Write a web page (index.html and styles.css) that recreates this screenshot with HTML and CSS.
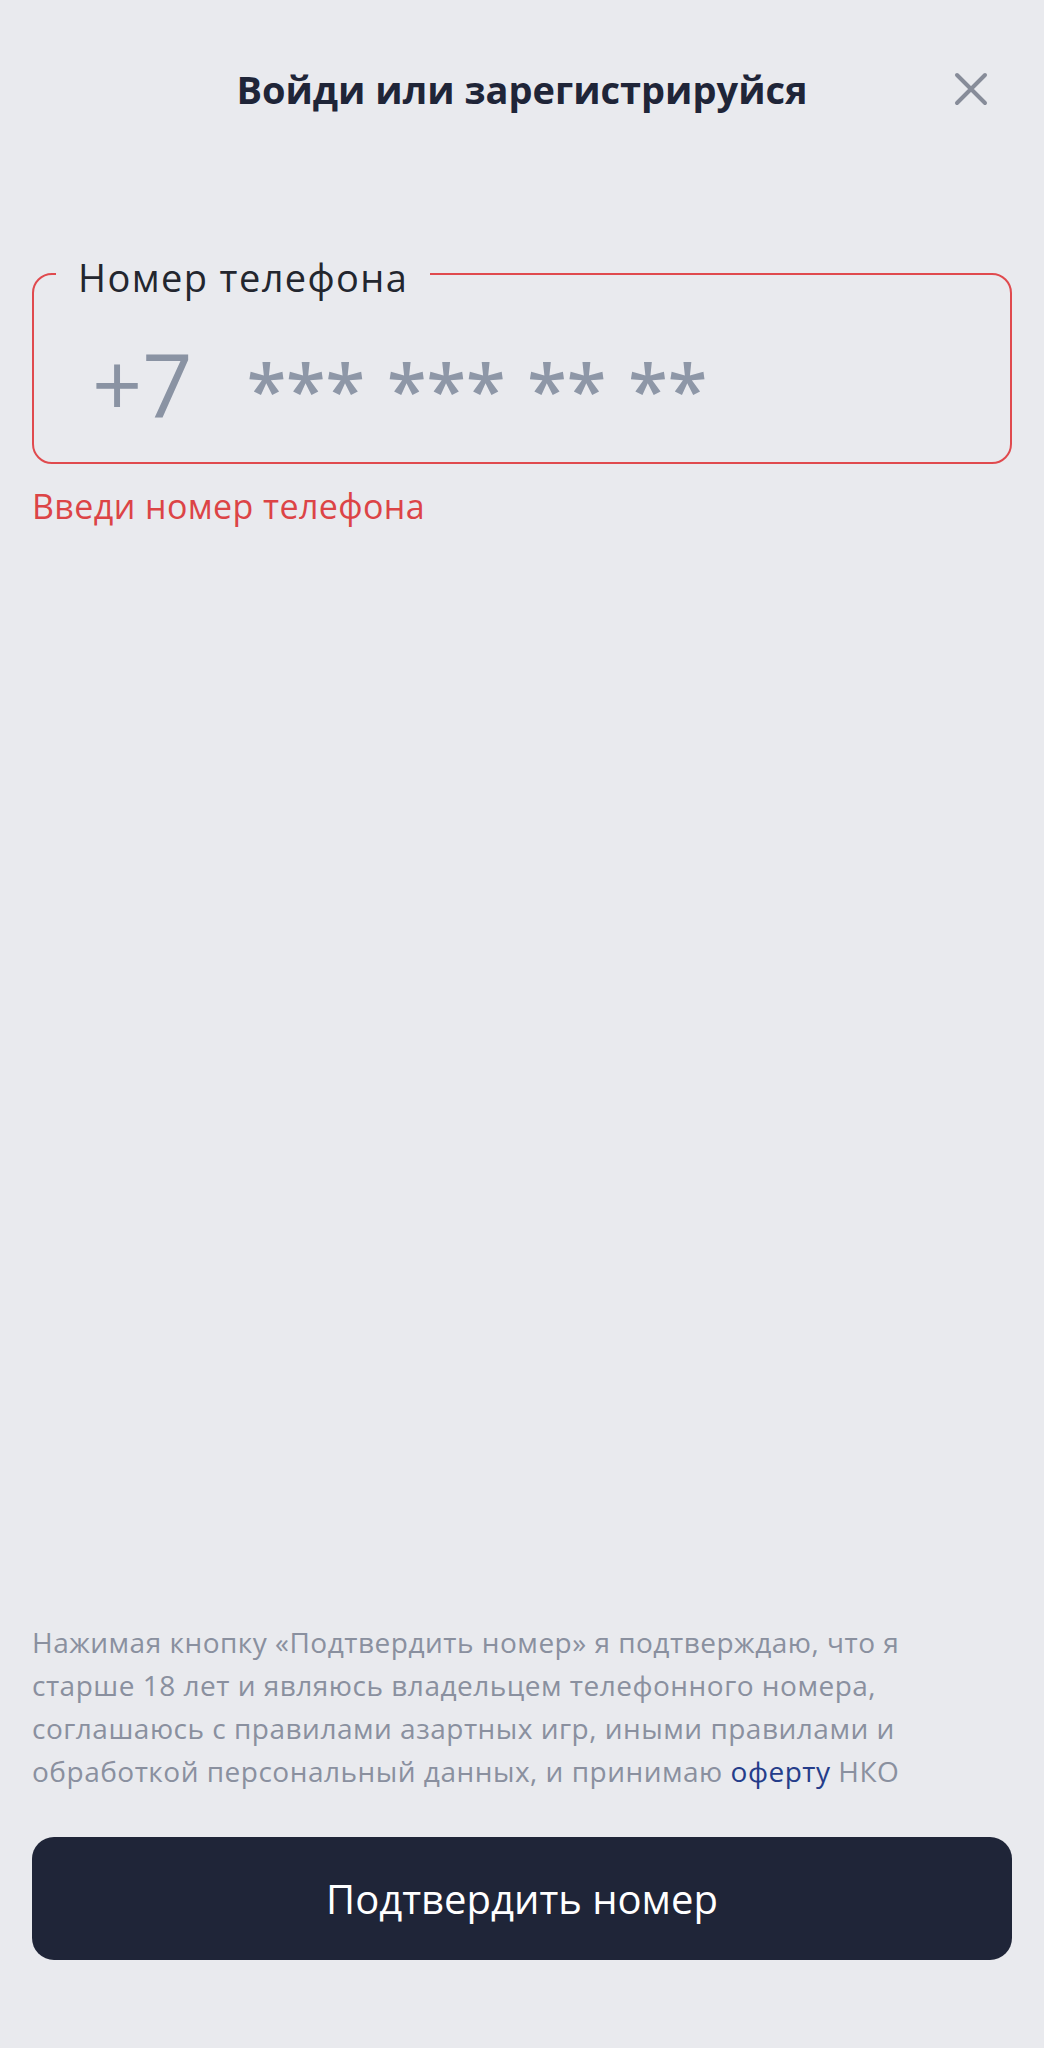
FILE: index.html
```html
<!DOCTYPE html>
<html lang="ru">
<head>
  <meta charset="UTF-8">
  <title>Вход</title>
  <link rel="stylesheet" href="styles.css">
</head>
<body>
  <div class="page">
    <!-- Header -->
    <header class="top-bar">
      <span></span>
      <h1 class="title">Войди или зарегистрируйся</h1>
      <button class="close" aria-label="Закрыть">
        <svg width="34" height="34" viewBox="0 0 34 34">
          <path d="M3 3 L31 31 M31 3 L3 31" stroke="#878c99" stroke-width="4" stroke-linecap="round" fill="none"/>
        </svg>
      </button>
    </header>

    <!-- Phone field -->
    <div class="phone-field">
      <span class="phone-label">Номер телефона</span>
      <div class="phone-row">
        <span class="prefix">+7</span>
        <span class="mask">
          <span>***</span>
          <span>***</span>
          <span>**</span>
          <span>**</span>
        </span>
      </div>
    </div>
    <p class="error">Введи номер телефона</p>

    <!-- Bottom -->
    <p class="terms">
      Нажимая кнопку «Подтвердить номер» я подтверждаю, что я<br>
      старше 18 лет и являюсь владельцем телефонного номера,<br>
      соглашаюсь с правилами азартных игр, иными правилами и<br>
      обработкой персональный данных, и принимаю <a href="#">оферту</a> НКО
    </p>
    <button class="confirm">Подтвердить номер</button>
  </div>
</body>
</html>
```

FILE: styles.css
```css
* { margin: 0; padding: 0; box-sizing: border-box; }

body {
  background-color: #e9eaee;
  font-family: "Open Sans", "Noto Sans", sans-serif;
  color: #1f2538;
}

.page {
  min-height: 100vh;
  display: flex;
  flex-direction: column;
  padding: 0 32px 88px;
}

/* Header */
.top-bar {
  display: grid;
  grid-template-columns: 1fr auto 1fr;
  align-items: center;
  padding-top: 62px;
  height: 116px;
}
.title {
  font-size: 38px;
  font-weight: 700;
  color: #1f2538;
  line-height: 52px;
}
.close {
  justify-self: end;
  margin-right: 24px;
  background: none;
  border: none;
  width: 34px;
  height: 34px;
  cursor: pointer;
}
.close svg { display: block; }

/* Phone field */
.phone-field {
  position: relative;
  margin-top: 157px;
  height: 191px;
  border: 2.5px solid #e04a4e;
  border-radius: 20px;
  padding: 58px 0 0 58px;
}
.phone-label {
  position: absolute;
  top: -22px;
  left: 22px;
  padding: 0 22px;
  background: #e9eaee;
  font-size: 38px;
  letter-spacing: 1.4px;
  line-height: 48px;
  color: #23262e;
}
.phone-row {
  display: flex;
  align-items: center;
  gap: 54px;
  color: #8a93a3;
}
.prefix {
  font-size: 88px;
  line-height: 100px;
}
.mask {
  display: flex;
  gap: 22px;
  font-size: 72px;
  font-weight: 600;
  line-height: 72px;
  color: #8e97a7;
  padding-top: 12px;
}

.error {
  margin-top: 20px;
  font-size: 34px;
  letter-spacing: 0.4px;
  line-height: 44px;
  color: #dc4446;
}

/* Terms + button */
.terms {
  margin-top: auto;
  font-size: 28px;
  letter-spacing: 0.5px;
  line-height: 43px;
  color: #8a909f;
}
.terms a {
  color: #253d8a;
  text-decoration: none;
}
.confirm {
  margin-top: 44px;
  height: 123px;
  border: none;
  border-radius: 22px;
  background: #1f2538;
  color: #ffffff;
  font-family: inherit;
  font-size: 40px;
  cursor: pointer;
}
```
